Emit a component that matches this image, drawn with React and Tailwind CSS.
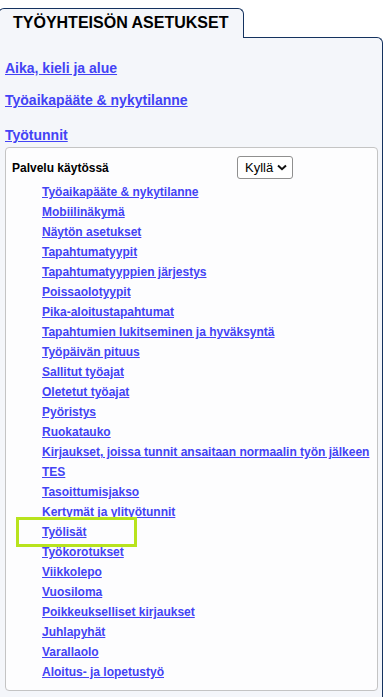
import React from "react";

const items = [
  "Työaikapääte & nykytilanne",
  "Mobiilinäkymä",
  "Näytön asetukset",
  "Tapahtumatyypit",
  "Tapahtumatyyppien järjestys",
  "Poissaolotyypit",
  "Pika-aloitustapahtumat",
  "Tapahtumien lukitseminen ja hyväksyntä",
  "Työpäivän pituus",
  "Sallitut työajat",
  "Oletetut työajat",
  "Pyöristys",
  "Ruokatauko",
  "Kirjaukset, joissa tunnit ansaitaan normaalin työn jälkeen",
  "TES",
  "Tasoittumisjakso",
  "Kertymät ja ylityötunnit",
  "Työlisät",
  "Työkorotukset",
  "Viikkolepo",
  "Vuosiloma",
  "Poikkeukselliset kirjaukset",
  "Juhlapyhät",
  "Varallaolo",
  "Aloitus- ja lopetustyö",
];

export default function App() {
  return (
    <div
      className="relative w-[384px] h-[697px] overflow-hidden bg-white pt-[8px]"
      style={{ fontFamily: '"Liberation Sans", Arial, sans-serif' }}
    >
      {/* tab */}
      <div className="relative z-10 -ml-[2px] -mb-[1px] w-[246px] h-[30px] border-t border-l border-r border-[#14325f] rounded-t-[6px] bg-[#f4f6fa] pl-[14px] pt-[5px]">
        <span className="block text-[16px] leading-[18px] font-bold text-black">
          TYÖYHTEISÖN ASETUKSET
        </span>
      </div>
      {/* panel */}
      <div className="-ml-[2px] w-[385px] h-[700px] border-t border-l border-r border-[#14325f] rounded-tr-[6px] bg-[#f4f6fa] pl-[6px] pr-[4px] pt-[22px]">
        <a className="block text-[14px] leading-[16px] font-bold text-[#4343f5] underline">
          Aika, kieli ja alue
        </a>
        <a className="block mt-[16px] text-[14px] leading-[16px] font-bold text-[#4343f5] underline">
          Työaikapääte &amp; nykytilanne
        </a>
        <a className="block mt-[19px] text-[14px] leading-[16px] font-bold text-[#4343f5] underline">
          Työtunnit
        </a>
        <div className="mt-[4px] border border-[#c4c4c4] rounded-[4px] bg-[#fdfdfe] pl-[6px] pt-[8px] pb-[8px]">
          <div className="flex items-center h-[23px]">
            <span className="w-[225px] text-[12px] font-bold text-black">
              Palvelu käytössä
            </span>
            <div className="flex items-center justify-between w-[56px] h-[23px] border border-[#8f8f8f] rounded-[3px] bg-white pl-[7px] pr-[5px]">
              <span className="text-[13px] text-black">Kyllä</span>
              <svg width="10" height="7" viewBox="0 0 10 7">
                <path d="M1 1.5 L5 5.2 L9 1.5" fill="none" stroke="#111" strokeWidth="2" />
              </svg>
            </div>
          </div>
          <div className="mt-[3px] pl-[30px] flex flex-col">
            {items.map((t) => (
              <a
                key={t}
                className="block text-[12px] leading-[20px] font-bold text-[#4343f5] underline whitespace-nowrap"
              >
                {t}
              </a>
            ))}
          </div>
        </div>
      </div>
      {/* highlight annotation */}
      <div className="absolute left-[16px] top-[517px] w-[121px] h-[30px] border-[3px] border-[#b8e31d]" />
    </div>
  );
}
